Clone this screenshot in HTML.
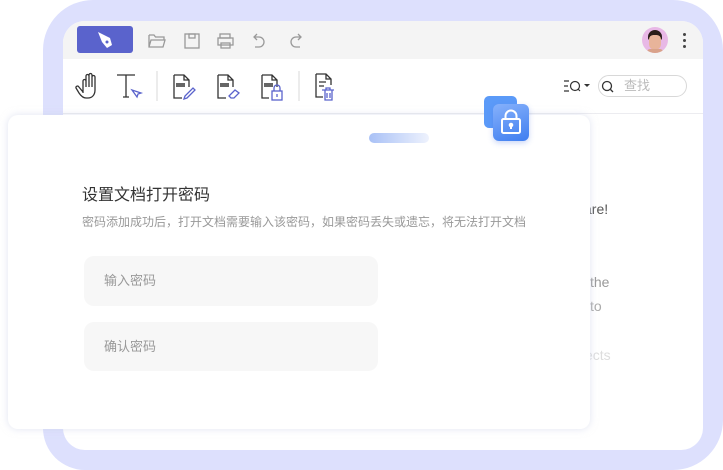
<!DOCTYPE html>
<html><head><meta charset="utf-8"><style>
*{margin:0;padding:0;box-sizing:border-box}
body{width:723px;height:470px;background:#fff;position:relative;overflow:hidden;font-family:"Liberation Sans","Noto Sans CJK SC",sans-serif}
.abs{position:absolute}
</style></head><body>
<div class="abs" style="left:43px;top:0;width:680px;height:470px;background:#dde0fd;border-radius:50px 50px 50px 42px"></div>
<div class="abs" style="left:63px;top:21px;width:640px;height:429px;background:#fff;border-radius:22px;overflow:hidden">
  <div class="abs" style="left:0;top:0;width:640px;height:38px;background:#f4f4f4"></div>
  <div class="abs" style="left:0;top:92px;width:640px;height:1px;background:#ececf0"></div>
</div>
<!-- logo -->
<div class="abs" style="left:77px;top:26px;width:56px;height:27px;background:#5a63cc;border-radius:3px"></div>
<svg class="abs" style="left:96px;top:30px" width="20" height="20" viewBox="0 0 20 20"><path d="M2 2 L14 8 L16 15 L11 18 L6 12 Z" fill="#fff"/><circle cx="11" cy="12" r="1.5" fill="#5a63cc"/></svg>
<!-- title icons -->
<svg class="abs" style="left:140px;top:28px" width="170" height="24" viewBox="0 0 170 24" fill="none" stroke="#999" stroke-width="1.3">
<path d="M9 7h5l1.5 2H24v3M9 7v12h14l2-7H11l-2 7"/>
<rect x="45" y="6" width="14" height="14"/><rect x="49" y="6" width="6" height="4"/>
<rect x="80" y="6" width="10" height="4"/><rect x="78" y="10" width="15" height="7"/><rect x="81" y="15" width="9" height="5"/>
<path d="M117 6l-3 3 3 3M114 9h5a5 5 0 0 1 0 10h-4"/>
<path d="M158 6l3 3-3 3M161 9h-5a5 5 0 0 0 0 10h4"/>
</svg>
<!-- avatar -->
<div class="abs" style="left:642px;top:27px;width:26px;height:26px;border-radius:50%;background:#e8b8e6;overflow:hidden">
 <div class="abs" style="left:6px;top:3px;width:14px;height:10px;border-radius:7px 7px 2px 2px;background:#2a1d1a"></div>
 <div class="abs" style="left:7px;top:8px;width:12px;height:15px;border-radius:5px 5px 7px 7px;background:#e8b49a"></div>
 <div class="abs" style="left:5px;top:22px;width:16px;height:6px;border-radius:6px;background:#d9a28a"></div>
</div>
<div class="abs" style="left:683px;top:33px;width:3px;height:3px;background:#444;border-radius:50%;box-shadow:0 6px 0 #444,0 12px 0 #444"></div>
<!-- toolbar icons -->
<svg class="abs" style="left:74px;top:70px" width="270" height="34" viewBox="0 0 270 34" fill="none" stroke="#333" stroke-width="1.3">
<path d="M9 23V11a1.5 1.5 0 0 1 3 0v6M12 17V6a1.5 1.5 0 0 1 3 0v11M15 17V5a1.5 1.5 0 0 1 3 0v12M18 17V7a1.5 1.5 0 0 1 3 0v13c0 5-3 8-7 8h-2c-3 0-5-2-7-5l-3-5a1.5 1.5 0 0 1 2.5-1.5L9 22"/>
<path d="M43 5h18M52 5v22M49 27h6"/>
<path d="M58 20l9 3-3 1 -1 3z" stroke="#5a63cc"/>
<path d="M100 5h10l5 5v7M100 5v23h8M110 5v5h5" />
<rect x="102" y="13" width="9" height="4" fill="#666" stroke="none"/>
<path d="M110 29l1-3 8-8 2 2-8 8z" stroke="#5a63cc"/>
<path d="M144 5h10l5 5v7M144 5v23h8M154 5v5h5"/>
<rect x="146" y="13" width="9" height="4" fill="#666" stroke="none"/>
<path d="M155 26l6-6 4 3-5 5h-3z" stroke="#5a63cc"/>
<path d="M188 5h10l5 5v7M188 5v23h7M198 5v5h5"/>
<rect x="190" y="13" width="9" height="4" fill="#666" stroke="none"/>
<rect x="198" y="21" width="10" height="9" stroke="#5a63cc"/><path d="M200 21v-3a3 3 0 0 1 6 0v3M203 24v3" stroke="#5a63cc"/>
<path d="M242 4h10l5 5v6M242 4v23h7M252 4v5h5M245 12h7M245 16h5"/>
<path d="M248 20h12M251 20v10h7V20M253 23v5M256 23v5M252 20v-2h4v2" stroke="#5a63cc"/>
</svg>
<div class="abs" style="left:156px;top:71px;width:2px;height:30px;background:#ececec"></div>
<div class="abs" style="left:298px;top:71px;width:2px;height:30px;background:#ececec"></div>
<!-- search -->
<svg class="abs" style="left:563px;top:79px" width="32" height="16" viewBox="0 0 32 16" fill="none" stroke="#333" stroke-width="1.2"><path d="M1 2h5M1 7h4M1 12h5"/><circle cx="12" cy="7" r="4.5"/><path d="M15 10l2 2"/><path d="M21 5h6l-3 3z" fill="#333" stroke="none"/></svg>
<div class="abs" style="left:598px;top:75px;width:89px;height:22px;border:1px solid #d8d8d8;border-radius:11px"></div>
<svg class="abs" style="left:601px;top:80px" width="14" height="14" viewBox="0 0 14 14" fill="none" stroke="#333" stroke-width="1.3"><circle cx="6" cy="6" r="4.5"/><path d="M9.5 9.5l2.5 2.5"/></svg>
<div class="abs" style="left:624px;top:77px;font-size:13px;color:#bbb;line-height:18px">查找</div>
<!-- background text -->
<div class="abs" style="left:584px;top:201px;font-size:14px;color:#555">are!</div>
<div class="abs" style="left:590px;top:274px;font-size:14px;color:#999">the</div>
<div class="abs" style="left:590px;top:298px;font-size:14px;color:#aaa">to</div>
<div class="abs" style="left:585px;top:347px;font-size:14px;color:#ddd">ects</div>
<!-- modal -->
<div class="abs" style="left:8px;top:115px;width:582px;height:314px;background:#fff;border-radius:10px;box-shadow:0 0 8px rgba(200,205,230,0.55)"></div>
<div class="abs" style="left:369px;top:133px;width:60px;height:10px;border-radius:5px;background:linear-gradient(90deg,#a9c1f6,#eef2fd)"></div>
<div class="abs" style="left:484px;top:96px;width:33px;height:32px;border-radius:5px;background:#5b9af8"></div>
<div class="abs" style="left:493px;top:104px;width:36px;height:37px;border-radius:6px;background:linear-gradient(160deg,#86b1fb,#3f7ef0);box-shadow:0 2px 6px rgba(80,120,230,.3)"></div>
<svg class="abs" style="left:493px;top:104px" width="36" height="37" viewBox="0 0 36 37" fill="none" stroke="#fff" stroke-width="2"><rect x="9" y="15" width="18" height="14" rx="1.5"/><path d="M12.5 15v-3a5.5 5.5 0 0 1 11 0v3"/><circle cx="18" cy="21" r="1.3" fill="#fff"/><path d="M18 22v3"/></svg>
<div class="abs" style="left:82px;top:185px;font-size:16px;color:#333;line-height:22px">设置文档打开密码</div>
<div class="abs" style="left:82px;top:214px;font-size:12px;color:#999;line-height:16px;white-space:nowrap">密码添加成功后，打开文档需要输入该密码，如果密码丢失或遗忘，将无法打开文档</div>
<div class="abs" style="left:84px;top:256px;width:294px;height:50px;background:#f7f7f7;border-radius:10px"></div>
<div class="abs" style="left:104px;top:272px;font-size:13px;color:#999;line-height:18px">输入密码</div>
<div class="abs" style="left:84px;top:322px;width:294px;height:49px;background:#f7f7f7;border-radius:10px"></div>
<div class="abs" style="left:104px;top:338px;font-size:13px;color:#999;line-height:18px">确认密码</div>
</body></html>
